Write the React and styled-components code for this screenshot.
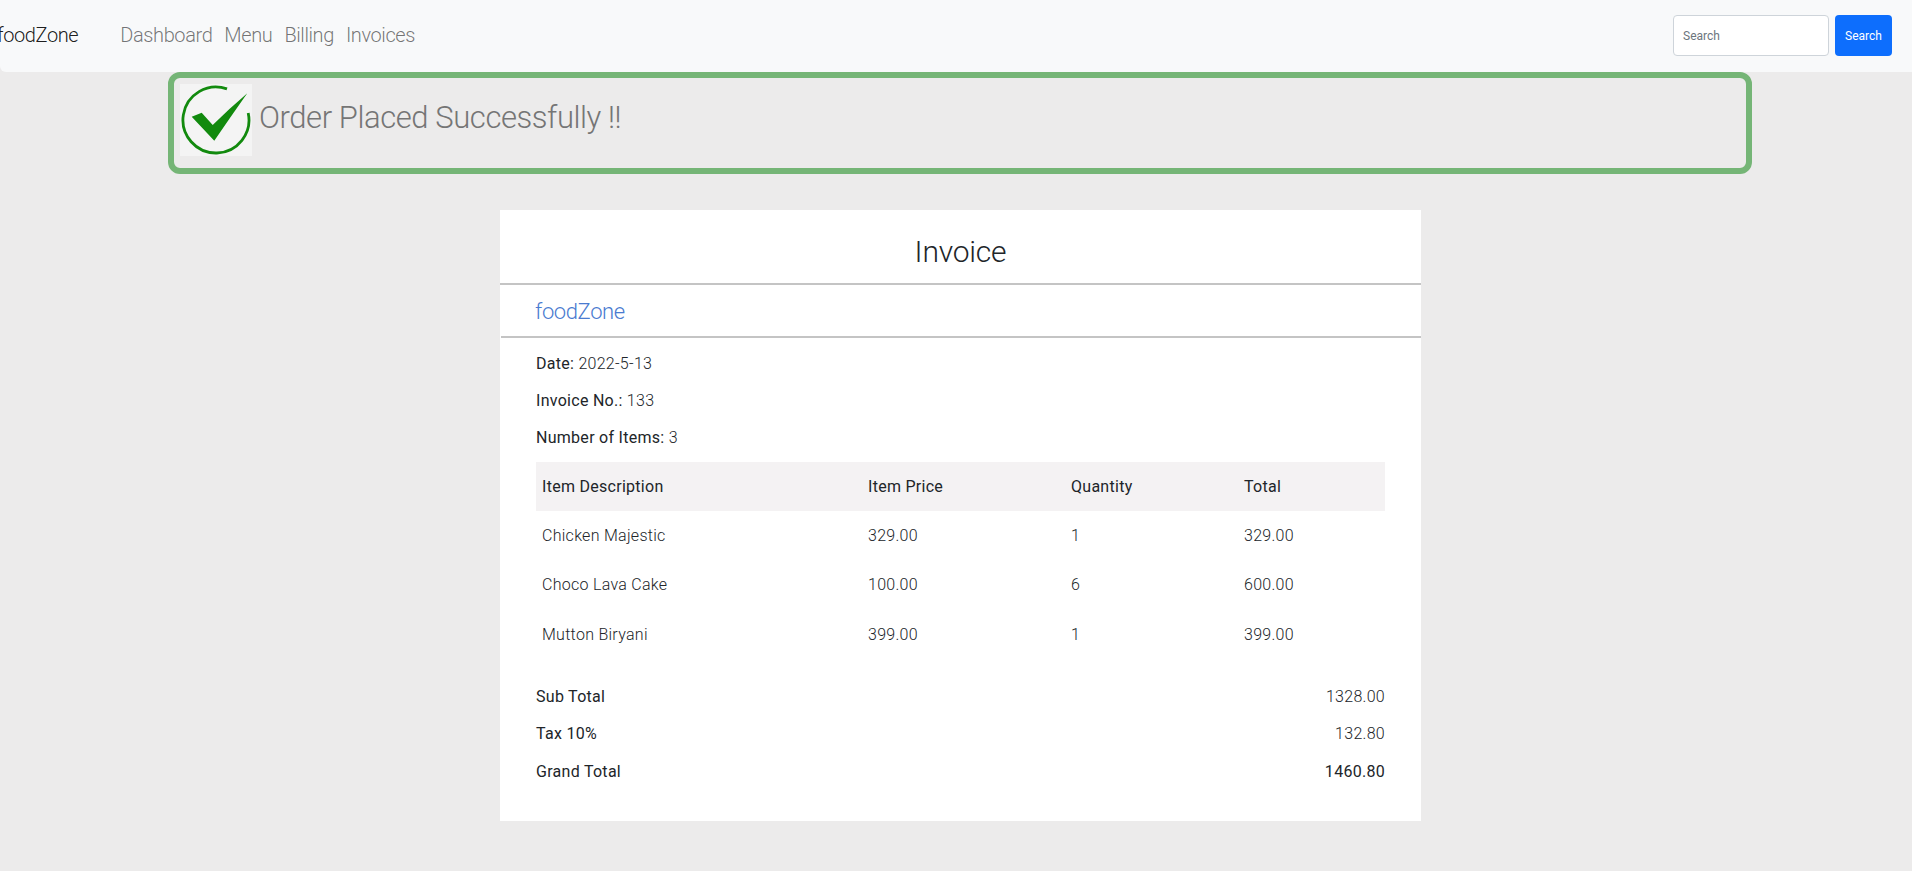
import React from 'react'
import styled, { createGlobalStyle } from 'styled-components'

const GlobalStyle = createGlobalStyle`
  * { box-sizing: border-box; }
  body {
    margin: 0;
    background-color: #ecebeb;
    font-family: Roboto, "Liberation Sans", sans-serif;
    font-weight: 300;
    font-size: 16px;
    line-height: 24px;
    letter-spacing: 0.28px;
    color: #212529;
  }
`

const Navbar = styled.nav`
  height: 72px;
  padding: 0 20px 1px 0;
  background-color: #f8f9fa;
  border-bottom-left-radius: 6px;
  display: flex;
  align-items: center;
  justify-content: space-between;
`

const NavLeft = styled.div`
  display: flex;
  align-items: center;
  padding-bottom: 2px;
  letter-spacing: -0.4px;
`

const Brand = styled.a`
  margin: 0 42px 0 -3px;
  font-size: 20px;
  color: rgba(0, 0, 0, 0.9);
`

const NavLinks = styled.div`
  display: flex;
  gap: 12px;
`

const NavLink = styled.a`
  font-size: 20px;
  color: rgba(0, 0, 0, 0.55);
`

const SearchForm = styled.form`
  display: flex;
  gap: 6px;
`

const SearchInput = styled.input`
  width: 156px;
  height: 41px;
  padding: 0 9px;
  background: #fff;
  border: 1px solid #ced4da;
  border-radius: 4px;
  font-family: Roboto, sans-serif;
  font-size: 12px;
  font-weight: 400;

  &::placeholder {
    color: #6c757d;
  }
`

const SearchButton = styled.button`
  width: 57px;
  height: 41px;
  padding: 0;
  background-color: #0d6efd;
  color: #fff;
  border: none;
  border-radius: 4px;
  font-family: Roboto, sans-serif;
  font-size: 12px;
  font-weight: 400;
`

const SuccessAlert = styled.div`
  width: 1584px;
  height: 102px;
  margin-left: 168px;
  padding: 6px;
  border: 6px solid #75b576;
  border-radius: 12px;
  display: flex;
  align-items: flex-start;
  gap: 7px;
`

const AlertText = styled.h2`
  margin: 0;
  height: 72px;
  line-height: 68px;
  font-size: 31px;
  font-weight: 300;
  letter-spacing: -0.43px;
  color: #757575;
`

const InvoiceCard = styled.section`
  width: 921px;
  margin: 36px 0 50px 500px;
  padding-bottom: 24px;
  background-color: #fff;
`

const InvoiceTitle = styled.h1`
  height: 75px;
  margin: 0;
  padding-top: 23px;
  line-height: 38px;
  text-align: center;
  font-size: 30px;
  font-weight: 300;
  letter-spacing: -0.2px;
  border-bottom: 2px solid #c4c4c4;
`

const BrandRow = styled.div`
  height: 53px;
  margin-left: 1px;
  padding: 11px 34px 0;
  line-height: 32px;
  font-size: 22px;
  letter-spacing: -0.4px;
  color: #4a7bd0;
  border-bottom: 2px solid #c4c4c4;
`

const Body = styled.div`
  padding: 14px 36px 0;
`

const InfoLine = styled.p`
  margin: 0 0 13px;
`

const Label = styled.span`
  font-weight: 400;
`

const ItemTable = styled.table`
  width: 100%;
  margin-top: -1px;
  border-collapse: collapse;
`

const HeadRow = styled.tr`
  background-color: #f4f2f3;
`

const HeadCell = styled.th`
  height: 49px;
  padding: 0 6px;
  text-align: left;
  font-weight: 400;
  width: ${(p) => p.$width};
`

const Cell = styled.td`
  height: 49.5px;
  padding: 0 6px;
`

const Summary = styled.div`
  margin-top: 25px;
`

const SummaryRow = styled.div`
  display: flex;
  justify-content: space-between;
  height: 37.5px;
  font-weight: ${(p) => (p.$total ? 400 : 300)};
`

const items = [
  { name: 'Chicken Majestic', price: '329.00', qty: 1, total: '329.00' },
  { name: 'Choco Lava Cake', price: '100.00', qty: 6, total: '600.00' },
  { name: 'Mutton Biryani', price: '399.00', qty: 1, total: '399.00' },
]

const CheckIcon = () => (
  <svg width="72" height="72" viewBox="0 0 72 72">
    <rect width="72" height="72" fill="#f4f4f4" />
    <path
      d="M47 4.9 A33 33 0 1 0 68.2 29"
      fill="none"
      stroke="#128a0e"
      strokeWidth="2.8"
    />
    <path d="M11.7 32.7 L21.7 28.7 L32.7 41 Q50 24 67.3 9.3 Q52 31 34.3 56.7 Z" fill="#128a0e" />
  </svg>
)

const App = () => {
  return (
    <>
      <GlobalStyle />
      <Navbar>
        <NavLeft>
          <Brand>foodZone</Brand>
          <NavLinks>
            <NavLink>Dashboard</NavLink>
            <NavLink>Menu</NavLink>
            <NavLink>Billing</NavLink>
            <NavLink>Invoices</NavLink>
          </NavLinks>
        </NavLeft>
        <SearchForm>
          <SearchInput placeholder="Search" />
          <SearchButton type="button">Search</SearchButton>
        </SearchForm>
      </Navbar>

      <SuccessAlert>
        <CheckIcon />
        <AlertText>Order Placed Successfully !!</AlertText>
      </SuccessAlert>

      <InvoiceCard>
        <InvoiceTitle>Invoice</InvoiceTitle>
        <BrandRow>foodZone</BrandRow>
        <Body>
          <InfoLine><Label>Date:</Label> 2022-5-13</InfoLine>
          <InfoLine><Label>Invoice No.:</Label> 133</InfoLine>
          <InfoLine><Label>Number of Items:</Label> 3</InfoLine>
          <ItemTable>
            <thead>
              <HeadRow>
                <HeadCell $width="326px">Item Description</HeadCell>
                <HeadCell $width="203px">Item Price</HeadCell>
                <HeadCell $width="173px">Quantity</HeadCell>
                <HeadCell>Total</HeadCell>
              </HeadRow>
            </thead>
            <tbody>
              {items.map((item) => (
                <tr key={item.name}>
                  <Cell>{item.name}</Cell>
                  <Cell>{item.price}</Cell>
                  <Cell>{item.qty}</Cell>
                  <Cell>{item.total}</Cell>
                </tr>
              ))}
            </tbody>
          </ItemTable>
          <Summary>
            <SummaryRow><Label>Sub Total</Label><span>1328.00</span></SummaryRow>
            <SummaryRow><Label>Tax 10%</Label><span>132.80</span></SummaryRow>
            <SummaryRow $total><Label>Grand Total</Label><span>1460.80</span></SummaryRow>
          </Summary>
        </Body>
      </InvoiceCard>
    </>
  )
}

export default App
